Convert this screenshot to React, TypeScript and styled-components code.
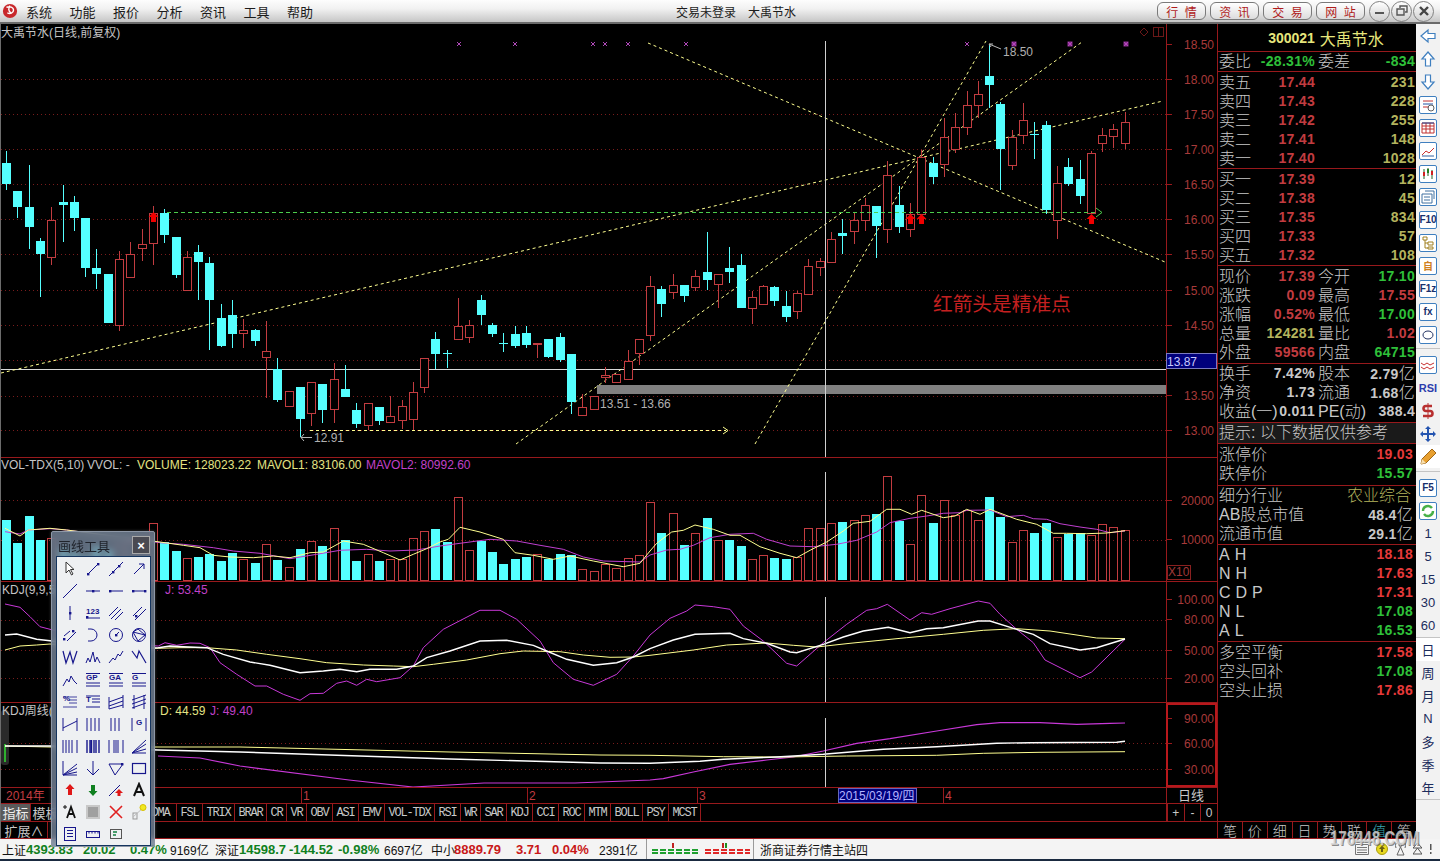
import React from 'react'
import styled, { createGlobalStyle } from 'styled-components'

const FONT = '"Liberation Sans", "Noto Sans CJK SC", sans-serif'
const RED = '#c23c40'
const BRIGHT_RED = '#e63a3a'
const GREEN = '#2fc03a'
const OLIVE = '#b4b45e'
const GREY = '#c8c8c8'
const CYAN = '#55ffff'
const LINE = '#98191c'
const AXIS_TEXT = '#a83a3a'
const NAVY = '#16168c'

const Global = createGlobalStyle`
  html, body { margin: 0; padding: 0; background: #000; }
  * { box-sizing: border-box; }
`

const Shell = styled.div`
  position: relative;
  width: 1440px;
  height: 861px;
  overflow: hidden;
  display: flex;
  flex-direction: column;
  font-family: ${FONT};
  background: #000;
`

/* title bar */
const TopBar = styled.div`
  height: 24px;
  flex: none;
  display: flex;
  align-items: center;
  padding-left: 2px;
  background: linear-gradient(#fdfdfd, #f1f1f1 40%, #c6c6c6);
  border-bottom: 2px solid #6a6a6a;
  color: #1c1c1c;
`
const Menu = styled.div`
  display: flex;
  gap: 17.5px;
  margin-left: 8px;
  font-size: 13px;
  width: 300px;
`
const Title = styled.div`
  margin-left: 350px;
  width: 450px;
  display: flex;
  gap: 12px;
  font-size: 12px;
`
const Pills = styled.div`
  display: flex;
  gap: 4px;
  margin-left: 31px;
`
const Pill = styled.div`
  width: 49px;
  height: 18px;
  display: flex;
  justify-content: space-around;
  align-items: center;
  padding: 0 5px;
  font-size: 12px;
  color: #b01c1c;
  border: 1px solid #7a7a7a;
  border-radius: 6px;
  background: linear-gradient(#fff, #dcdcdc);
`
const Round = styled.div`
  width: 21px;
  height: 21px;
  flex: none;
  margin-left: 1px;
  border: 1px solid #808080;
  border-radius: 50%;
  background: linear-gradient(#fff, #cfcfcf);
  display: flex;
  align-items: center;
  justify-content: center;
`
const Rounds = styled.div`
  display: flex;
  margin-left: 3px;
`

/* body */
const Body = styled.div`
  flex: 1;
  min-height: 0;
  display: flex;
  border-left: 1px solid #6c6c6c;
`
const ChartColumn = styled.div`
  width: 1216px;
  flex: none;
  display: flex;
  flex-direction: column;
`
const ChartPane = styled.div<{ $h: number }>`
  height: ${(p) => p.$h}px;
  flex: none;
  border-bottom: 1px solid ${LINE};
  line-height: 0;
`
const PlotSvg = styled.svg`
  display: block;
  font-family: ${FONT};
  font-size: 12px;
`
const TabRow = styled.div<{ $h: number }>`
  height: ${(p) => p.$h}px;
  flex: none;
  display: flex;
  border-bottom: 1px solid ${LINE};
`
const IndexTab = styled.div<{ $w: number; $on?: boolean; $cjk?: boolean }>`
  width: ${(p) => p.$w}px;
  flex: none;
  display: flex;
  align-items: center;
  justify-content: center;
  border-right: 1px solid ${LINE};
  background: ${(p) => (p.$on ? '#5a5a5a' : 'transparent')};
  color: ${(p) => (p.$on ? '#eee' : GREY)};
  font-family: ${(p) => (p.$cjk ? FONT : '"Liberation Mono", monospace')};
  font-size: ${(p) => (p.$cjk ? '13px' : '12px')};
  letter-spacing: ${(p) => (p.$cjk ? '0' : '-1.2px')};
  white-space: nowrap;
  overflow: hidden;
`
const ScaleButtons = styled.div`
  margin-left: auto;
  width: 51px;
  display: flex;
  border-left: 2px solid ${LINE};
`
const ScaleButton = styled.div`
  flex: 1;
  display: flex;
  align-items: center;
  justify-content: center;
  border-right: 1px solid ${LINE};
  color: ${GREY};
  font-size: 12px;
  &:last-child { border-right: 0; }
`

/* quote panel */
const QuotePanel = styled.div`
  width: 199px;
  flex: none;
  display: flex;
  flex-direction: column;
  border-left: 1px solid ${LINE};
  color: ${GREY};
`
const Section = styled.div<{ $h: number; $pt?: number; $line?: boolean }>`
  height: ${(p) => p.$h}px;
  flex: none;
  padding: ${(p) => p.$pt ?? 0}px 0 0 1px;
  border-bottom: ${(p) => (p.$line === false ? '0' : `1px solid ${LINE}`)};
`
const Header = styled(Section)`
  display: flex;
  align-items: center;
  justify-content: center;
  gap: 5px;
  padding: 1px 0 0 18px;
  color: #e6e67c;
  font-size: 16px;
`
const Code = styled.span`
  font-weight: 700;
  font-size: 14px;
`
const Row = styled.div`
  height: 19px;
  display: flex;
  gap: 3px;
  line-height: 19px;
`
const Pair = styled.div<{ $w: number }>`
  width: ${(p) => p.$w}px;
  display: flex;
  justify-content: space-between;
  white-space: nowrap;
`
const Label = styled.span<{ $wide?: boolean }>`
  font-size: 16px;
  font-weight: 300;
  color: ${GREY};
  letter-spacing: ${(p) => (p.$wide ? '5px' : '0')};
`
const Value = styled.span<{ $c: string }>`
  font-size: 14px;
  font-weight: 700;
  letter-spacing: 0.3px;
  color: ${(p) => p.$c};
`
const Unit = styled.span`
  font-size: 16px;
  font-weight: 300;
`
const Hint = styled(Section)`
  background: #1a1a1a;
  font-size: 16px;
  font-weight: 300;
  line-height: 20px;
`
const Industry = styled.span`
  font-size: 16px;
  font-weight: 300;
  color: ${OLIVE};
  padding-right: 2px;
`
const Filler = styled.div`
  flex: 1;
  padding: 1px 0 0 1px;
`
const PanelTabs = styled.div`
  height: 18px;
  flex: none;
  display: flex;
  border-top: 1px solid ${LINE};
  margin-top: -1px;
  border-bottom: 1px solid ${LINE};
`
const PanelTab = styled.div<{ $on?: boolean }>`
  flex: 1;
  display: flex;
  align-items: center;
  justify-content: center;
  font-size: 14px;
  font-weight: 300;
  color: ${(p) => (p.$on ? '#3aa8b0' : GREY)};
  border-right: 1px solid ${LINE};
  &:last-child { border-right: 0; }
`

/* right rail */
const Rail = styled.div`
  width: 24px;
  flex: none;
  background: #f2f2f2;
  display: flex;
  flex-direction: column;
  align-items: center;
`
const RailItem = styled.div<{ $on?: boolean }>`
  width: 24px;
  height: 23px;
  flex: none;
  display: flex;
  align-items: center;
  justify-content: center;
  background: ${(p) => (p.$on ? '#fff' : 'transparent')};
  color: #1c2c5c;
  font-size: 13px;
`
const RailBox = styled.div<{ $c?: string }>`
  width: 18px;
  height: 18px;
  display: flex;
  align-items: center;
  justify-content: center;
  border: 1px solid #3f7fbf;
  border-radius: 2px;
  background: #fff;
  font-size: 10px;
  font-weight: 700;
  color: ${(p) => p.$c ?? '#18306c'};
`
const RailRule = styled.div<{ $gap: number; $after: number }>`
  width: 24px;
  height: 1px;
  flex: none;
  margin: ${(p) => p.$gap}px 0 ${(p) => p.$after}px;
  background: #c4c4c4;
`
const RsiText = styled.span`
  font-size: 11px;
  font-weight: 700;
  color: #2c3cac;
`

/* status bar */
const StatusBar = styled.div`
  height: 22px;
  flex: none;
  display: flex;
  align-items: center;
  padding-left: 2px;
  background: #f4f4f4;
  border-bottom: 2px solid #1a2a40;
  color: #111;
  font-size: 12px;
`
const Stat = styled.span<{ $w: number; $c?: string; $b?: boolean }>`
  width: ${(p) => p.$w}px;
  flex: none;
  font-size: ${(p) => (p.$b ? '13px' : '12px')};
  font-weight: ${(p) => (p.$b ? 700 : 400)};
  color: ${(p) => p.$c ?? '#111'};
  white-space: nowrap;
`
const StatusRule = styled.div`
  width: 1px;
  height: 20px;
  flex: none;
  background: #9a9a9a;
`
const ServerName = styled(Stat)`
  margin-left: 6px;
`
const BreadthWrap = styled.div`
  margin: 0 3px 0 5px;
  line-height: 0;
`
const Tray = styled.div`
  margin-left: auto;
  display: flex;
  align-items: center;
  gap: 7px;
  padding-right: 8px;
`
const Watermark = styled.div`
  position: absolute;
  left: 1330px;
  top: 829px;
  font-size: 15px;
  font-weight: 700;
  color: rgba(214, 214, 214, 0.82);
  transform: scaleY(1.3);
  text-shadow: 1px 1px 0 rgba(90, 90, 90, 0.7);
  pointer-events: none;
`

/* floating drawing toolbar */
const ToolWindow = styled.div`
  position: absolute;
  left: 51px;
  top: 531px;
  width: 104px;
  height: 316px;
  padding: 24px 3px 0 4px;
  border: 1px solid #8d97a6;
  border-radius: 2px;
  background: rgba(116, 132, 152, 0.82);
  backdrop-filter: blur(3px);
  box-shadow: 0 0 3px rgba(255, 255, 255, 0.25);
`
const ToolTitle = styled.div`
  position: absolute;
  left: 6px;
  top: 4px;
  font-size: 13px;
  color: #20242c;
`
const ToolClose = styled.div`
  position: absolute;
  right: 4px;
  top: 4px;
  width: 18px;
  height: 18px;
  display: flex;
  align-items: center;
  justify-content: center;
  border: 1px solid #a8a8a8;
  background: #4a4a52;
  color: #fff;
  font-size: 13px;
  font-weight: 700;
`
const ToolGrid = styled.div`
  height: 290px;
  padding: 1px 0 0 1px;
  display: grid;
  grid-template-columns: repeat(4, 23px);
  grid-auto-rows: 22.1px;
  background: #eef0f2;
  border: 1px solid #14345e;
`
const ToolCell = styled.div`
  display: flex;
  align-items: center;
  justify-content: center;
  color: ${NAVY};
`
const MiniText = styled.text`
  font-size: 8px;
  font-weight: 700;
  fill: ${NAVY};
`

type Candle = ['c' | 'r', number, number, number, number]

// high, body top, body bottom, low in page pixels
const CANDLES: Candle[] = [
  ['c', 151, 163, 184, 190], ['c', 191, 191, 207, 218], ['c', 165, 207, 227, 249], ['c', 238, 241, 254, 297],
  ['r', 207, 220, 257, 265], ['c', 185, 202, 205, 242], ['c', 196, 202, 218, 231], ['c', 218, 218, 268, 277],
  ['c', 249, 268, 274, 289], ['c', 274, 274, 323, 323], ['r', 251, 259, 325, 331], ['r', 242, 254, 277, 277],
  ['r', 229, 244, 248, 261], ['r', 206, 213, 243, 265], ['c', 209, 213, 235, 243], ['c', 237, 237, 275, 278],
  ['r', 251, 257, 290, 290], ['c', 245, 252, 262, 300], ['c', 257, 263, 300, 350], ['c', 304, 318, 346, 347],
  ['c', 300, 315, 334, 348], ['r', 319, 330, 333, 348], ['c', 329, 330, 341, 346], ['r', 321, 351, 357, 398],
  ['c', 358, 369, 400, 402], ['r', 391, 391, 406, 406], ['c', 387, 387, 419, 437], ['r', 382, 382, 413, 426],
  ['c', 384, 384, 410, 423], ['r', 363, 379, 409, 423], ['c', 365, 389, 397, 397], ['c', 403, 410, 424, 428],
  ['r', 403, 403, 425, 430], ['c', 407, 407, 421, 425], ['r', 396, 416, 422, 422], ['r', 400, 406, 420, 429],
  ['r', 382, 392, 419, 430], ['r', 358, 358, 387, 393], ['c', 332, 339, 354, 369], ['c', 350, 353, 354, 368],
  ['r', 298, 326, 339, 339], ['r', 320, 325, 337, 343], ['c', 295, 300, 315, 325], ['c', 323, 325, 334, 337],
  ['c', 333, 343, 344, 352], ['c', 326, 334, 346, 348], ['c', 326, 333, 345, 348], ['r', 343, 343, 344, 358],
  ['c', 339, 339, 357, 358], ['c', 333, 337, 360, 362], ['c', 354, 354, 402, 414], ['r', 394, 407, 415, 415],
  ['r', 396, 396, 409, 409], ['r', 367, 375, 377, 383], ['r', 374, 374, 382, 382], ['r', 350, 361, 379, 379],
  ['r', 339, 339, 353, 365], ['r', 276, 286, 335, 341], ['c', 286, 289, 304, 317], ['r', 274, 285, 292, 299],
  ['c', 285, 285, 296, 302], ['r', 270, 276, 287, 291], ['c', 232, 272, 280, 290], ['r', 274, 274, 284, 308],
  ['c', 247, 268, 272, 283], ['c', 254, 265, 308, 308], ['r', 291, 297, 308, 324], ['r', 285, 286, 304, 305],
  ['c', 286, 287, 301, 306], ['c', 291, 306, 317, 322], ['r', 291, 293, 311, 319], ['r', 259, 266, 294, 294],
  ['r', 258, 261, 267, 276], ['r', 232, 239, 262, 262], ['c', 219, 233, 236, 254], ['r', 213, 220, 231, 244],
  ['r', 198, 205, 220, 231], ['c', 206, 206, 226, 258], ['r', 161, 175, 229, 243], ['c', 186, 205, 227, 233],
  ['r', 203, 214, 229, 237], ['r', 150, 157, 214, 214], ['c', 157, 163, 177, 184], ['r', 118, 137, 164, 177],
  ['r', 113, 127, 149, 153], ['r', 91, 105, 127, 135], ['r', 81, 94, 105, 118], ['c', 44, 76, 85, 108],
  ['c', 102, 104, 149, 190], ['r', 130, 137, 165, 170], ['r', 103, 120, 135, 144], ['c', 122, 134, 135, 159],
  ['c', 121, 125, 210, 214], ['r', 166, 183, 220, 239], ['c', 158, 167, 184, 186], ['c', 160, 179, 196, 204],
  ['r', 151, 153, 213, 213], ['r', 128, 135, 143, 152], ['r', 124, 129, 136, 148], ['r', 112, 122, 143, 149],
]

const VOL_TOPS = [
  520, 543, 516, 540, 538, 548, 552, 556, 546, 550, 544, 541, 536, 523, 542, 551, 558, 557, 554, 561,
  553, 559, 563, 544, 560, 567, 549, 541, 546, 528, 540, 561, 554, 561, 559, 559, 538, 531, 529, 542,
  497, 550, 541, 552, 564, 559, 557, 554, 559, 554, 555, 569, 571, 564, 568, 558, 555, 502, 533, 513,
  545, 533, 518, 540, 540, 546, 559, 555, 558, 559, 557, 528, 528, 523, 522, 520, 515, 514, 476, 521,
  544, 495, 523, 500, 515, 510, 520, 497, 517, 542, 530, 533, 523, 537, 534, 533, 535, 524, 527, 530,
]

const xOf = (i: number) => Math.round(6 + 11.3 * i) + 0.5

// "x,y" pairs read off a 3x crop, turned into page pixels
const pts = (ox: number, oy: number, s: string) =>
  s
    .trim()
    .split(/\s+/)
    .map((p) => {
      const [x, y] = p.split(',').map(Number)
      return `${(x / 3 + ox).toFixed(1)},${(y / 3 + oy).toFixed(1)}`
    })
    .join(' ')

const VOL_YELLOW = [
  pts(0, 520, '15,25 60,48 85,30 150,25 200,30'),
  pts(150, 456, '30,258 100,268 150,275 190,298 240,303 310,305 370,300 420,305 480,290 520,288 580,255 640,265 700,290 750,312 790,295 830,278 870,258 895,250 930,214 990,228 1060,250 1095,290 1150,298 1210,310 1260,300 1330,315 1420,332 1470,322'),
  pts(650, 456, '0,285 20,262 65,228 100,223 135,207 190,220 240,238 270,238 330,272 390,292 440,305 480,283 530,258 580,225 610,202 660,196 710,160 750,160 785,175 815,163 880,185 915,180 950,160 990,175 1020,160 1100,190 1160,205 1210,232 1250,232 1310,233 1370,231 1425,224'),
].join(' ')
const VOL_MAGENTA = [
  pts(0, 520, '15,35 60,42 85,30 150,26 200,30'),
  pts(150, 456, '30,260 100,265 190,275 250,285 330,292 420,308 500,295 570,283 650,280 720,285 800,282 870,270 930,262 1020,250 1100,255 1170,268 1240,280 1300,303 1360,315 1470,318'),
  pts(650, 456, '0,297 50,282 90,280 130,268 180,245 240,235 310,232 350,250 420,270 490,272 560,265 620,253 680,228 720,200 780,187 830,180 880,172 930,170 950,163 1020,162 1070,182 1120,178 1150,188 1190,190 1230,203 1290,213 1340,220 1380,230 1425,225'),
].join(' ')

const KDJ_WHITE = [
  pts(0, 520, '15,345 50,342 110,358 150,362 300,385'),
  pts(150, 456, '25,575 60,570 100,572 170,575 220,595 300,618 360,628 450,650 520,645 570,640 620,647 660,640 740,640 790,630 830,605 900,585 990,555 1070,553 1150,568 1190,585 1250,610 1330,628 1400,620 1450,603'),
  pts(650, 456, '0,578 70,552 135,535 240,532 280,548 350,562 420,588 440,590 520,565 580,543 640,525 715,514 780,530 830,518 880,515 985,495 1020,495 1100,520 1150,535 1200,563 1290,582 1340,575 1425,549'),
].join(' ')
const KDJ_YELLOW = [
  pts(0, 520, '15,390 60,378 110,375 150,372 300,385'),
  pts(150, 456, '25,577 90,575 170,575 260,582 350,595 450,608 530,620 640,627 730,630 790,632 850,625 950,612 1050,593 1120,585 1230,587 1300,597 1380,604 1450,603'),
  pts(650, 456, '0,598 130,582 230,567 350,561 430,568 500,573 600,562 770,545 880,535 1000,523 1100,518 1200,525 1340,546 1425,548'),
].join(' ')
const KDJ_MAGENTA = [
  pts(0, 520, '15,252 60,262 90,290 120,320 150,328 300,370'),
  pts(150, 456, '25,570 45,560 80,568 120,561 150,562 180,575 210,620 260,655 315,690 350,690 400,715 450,733 480,713 520,712 560,682 590,675 620,688 650,670 680,677 750,665 790,630 820,575 880,520 990,463 1050,463 1100,490 1170,555 1210,620 1270,670 1330,688 1400,655 1450,600'),
  pts(650, 456, '0,537 60,487 110,465 135,447 190,452 240,460 280,510 340,555 410,622 440,630 520,560 590,505 650,463 680,458 712,445 780,492 815,470 845,475 900,458 985,435 1020,442 1050,475 1100,520 1150,560 1185,612 1290,665 1325,648 1425,550'),
].join(' ')

const WEEK_MAGENTA = [
  '158,756 200,758 240,766 349,780 413,787 484,783 575,783',
  pts(650, 456, '0,972 40,968 130,948 240,925 350,912 430,903 520,885 620,862 720,848 860,825 980,806 1050,800 1170,800 1280,805 1380,802 1425,801'),
].join(' ')
const WEEK_WHITE = [
  '5,746 50,746 158,750 240,752 450,759 600,763',
  pts(650, 456, '0,922 150,916 220,910 380,903 520,895 700,880 860,872 1040,862 1140,860 1400,859 1425,856'),
].join(' ')
const WEEK_YELLOW = [
  '5,746 50,747 158,747 240,747 450,752 600,755',
  pts(650, 456, '0,898 220,902 400,903 590,900 860,898 1000,892 1170,889 1425,887'),
].join(' ')

const Plot = ({ top, h, children }: { top: number; h: number; children: React.ReactNode }) => (
  <PlotSvg width={1216} height={h} viewBox={`1 ${top} 1216 ${h}`}>
    {children}
  </PlotSvg>
)

const Grid = ({ ys }: { ys: number[] }) => (
  <>
    {ys.map((y) => (
      <line key={y} x1={1} x2={1166} y1={y + 0.5} y2={y + 0.5} stroke="#7a1c1c" strokeDasharray="1 3" />
    ))}
  </>
)

const Trace = ({ p, c, w = 1 }: { p: string; c: string; w?: number }) => (
  <polyline points={p} fill="none" stroke={c} strokeWidth={w} />
)

const AxisLine = ({ y1, y2 }: { y1: number; y2: number }) => (
  <line x1={1166.5} x2={1166.5} y1={y1} y2={y2} stroke={LINE} />
)

const AxisLabels = ({ rows }: { rows: [string, number][] }) => (
  <>
    {rows.map(([t, y]) => (
      <React.Fragment key={t}>
        <line x1={1166} x2={1172} y1={y + 0.5} y2={y + 0.5} stroke={LINE} />
        <text x={1214} y={y + 4.5} textAnchor="end" fill={AXIS_TEXT}>
          {t}
        </text>
      </React.Fragment>
    ))}
  </>
)

const Hash = ({ x, big }: { x: number; big?: boolean }) => (
  <g stroke="#b048b8" strokeWidth={1}>
    {big && <rect x={x - 2.5} y={41.5} width={5} height={5} fill="#8a2c90" stroke="none" />}
    <line x1={x - 2} x2={x + 2} y1={42} y2={46} />
    <line x1={x + 2} x2={x - 2} y1={42} y2={46} />
  </g>
)

const UpArrow = ({ x, y }: { x: number; y: number }) => (
  <polygon
    points={`${x},${y} ${x + 5},${y + 5} ${x + 2.5},${y + 5} ${x + 2.5},${y + 10} ${x - 2.5},${y + 10} ${x - 2.5},${y + 5} ${x - 5},${y + 5}`}
    fill="#f00000"
  />
)

const PriceAxisRows: [string, number][] = [
  ['18.50', 44], ['18.00', 79], ['17.50', 114], ['17.00', 149], ['16.50', 184], ['16.00', 219],
  ['15.50', 254], ['15.00', 290], ['14.50', 325], ['13.50', 395], ['13.00', 430],
]

const MainPane = () => (
  <ChartPane $h={434}>
    <Plot top={24} h={433}>
      <Grid ys={[79, 114, 149, 184, 219, 254, 290, 325, 360, 396, 430]} />
      <text x={1} y={37} fill="#c4c4c4">大禹节水(日线,前复权)</text>
      <polygon points="1144,28 1148,32 1144,36 1140,32" fill="none" stroke="#6c1818" />
      <rect x={1153.5} y={27.5} width={10} height={9} fill="none" stroke="#6c1818" />
      <line x1={1158.5} x2={1158.5} y1={28} y2={36} stroke="#6c1818" />
      <line x1={1} x2={1166} y1={369.5} y2={369.5} stroke="#d8d8d8" />
      <rect x={597} y={385} width={569} height={9} fill="#808080" />
      <g stroke="#ffff90" strokeDasharray="3 3" fill="none">
        <line x1={1} y1={373} x2={1163} y2={101} />
        <line x1={516} y1={444} x2={1082} y2={42} />
        <line x1={755} y1={444} x2={986} y2={41} />
        <line x1={648} y1={43} x2={1165} y2={262} />
        <line x1={310} y1={430.5} x2={726} y2={430.5} />
      </g>
      <path d="M723 427l5 3.5-5 3.5" fill="none" stroke="#ffff90" />
      {CANDLES.map(([k, hi, t, b, lo], i) => {
        const x = xOf(i)
        const c = k === 'c' ? CYAN : RED
        return (
          <g key={i} shapeRendering="crispEdges">
            <line x1={x} x2={x} y1={hi} y2={lo} stroke={c} />
            {k === 'c' ? (
              <rect x={x - 4.5} y={t} width={9} height={Math.max(b - t, 1)} fill={c} />
            ) : (
              <rect x={x - 4} y={t + 0.5} width={8} height={Math.max(b - t, 1)} fill="#000" stroke={c} />
            )}
          </g>
        )
      })}
      <line x1={167} x2={1098} y1={212.5} y2={212.5} stroke="#4ccc4c" strokeDasharray="4 3" />
      <path d="M1096 208l6 4.5-6 4.5" fill="none" stroke="#4ccc4c" />
      <line x1={825.5} x2={825.5} y1={41} y2={457} stroke="#d0d0d0" />
      {[459, 515, 593, 605, 628, 686, 967].map((x) => (
        <Hash key={x} x={x} />
      ))}
      {[1014, 1070, 1126].map((x) => (
        <Hash key={x} x={x} big />
      ))}
      <UpArrow x={153.5} y={212} />
      <UpArrow x={910.5} y={214} />
      <UpArrow x={921.5} y={214} />
      <UpArrow x={1091.5} y={214} />
      <path d="M312 437.5H301M304 434l-3 3.5 3 3.5" fill="none" stroke="#b8b8b8" />
      <text x={314} y={441.5} fill="#b0b0b0">12.91</text>
      <text x={600} y={407.5} fill="#b0b0b0">13.51 - 13.66</text>
      <path d="M1001 49l-12-5M989 44l4 0M989 44l2 3" fill="none" stroke="#b8b8b8" />
      <text x={1003} y={55.5} fill="#b0b0b0">18.50</text>
      <text x={933} y={311} fontSize={19.7} fill="#c42020">红箭头是精准点</text>
      <AxisLine y1={24} y2={457} />
      <AxisLabels rows={PriceAxisRows} />
      <rect x={1166.5} y={353.5} width={50} height={15} fill="#00007c" stroke="#7a7ac0" />
      <text x={1167} y={365.5} fill="#c8c8ff">13.87</text>
    </Plot>
  </ChartPane>
)

const VolumePane = () => (
  <ChartPane $h={124}>
    <Plot top={458} h={123}>
      <Grid ys={[500, 540]} />
      <text x={1} y={469} fill="#c4c4c4">VOL-TDX(5,10)</text>
      <text x={87} y={469} fill="#c4c4c4">VVOL: -</text>
      <text x={137} y={469} fill="#e4e484">VOLUME: 128023.22</text>
      <text x={257} y={469} fill="#e4e484">MAVOL1: 83106.00</text>
      <text x={366} y={469} fill="#c040c8">MAVOL2: 80992.60</text>
      {VOL_TOPS.map((t, i) => {
        const x = xOf(i)
        return CANDLES[i][0] === 'c' ? (
          <rect key={i} x={x - 4.5} y={t} width={9} height={580 - t} fill={CYAN} shapeRendering="crispEdges" />
        ) : (
          <rect key={i} x={x - 4} y={t + 0.5} width={8} height={580 - t} fill="none" stroke={RED} shapeRendering="crispEdges" />
        )
      })}
      <Trace p={VOL_MAGENTA} c="#c040d0" />
      <Trace p={VOL_YELLOW} c="#ffff90" />
      <line x1={825.5} x2={825.5} y1={472} y2={581} stroke="#d0d0d0" />
      <AxisLine y1={458} y2={581} />
      <AxisLabels rows={[['20000', 500], ['10000', 539]]} />
      <rect x={1167.5} y={565.5} width={23} height={14} fill="none" stroke="#8a2020" />
      <text x={1168} y={576} fill="#a03838">X10</text>
    </Plot>
  </ChartPane>
)

const KdjPane = () => (
  <ChartPane $h={121}>
    <Plot top={582} h={120}>
      <Grid ys={[620, 650, 678]} />
      <text x={2} y={594} fill="#c4c4c4">KDJ(9,9,5)</text>
      <text x={165} y={594} fill="#c040c8">J: 53.45</text>
      <Trace p={KDJ_MAGENTA} c="#c838d8" />
      <Trace p={KDJ_YELLOW} c="#ffff90" />
      <Trace p={KDJ_WHITE} c="#ffffff" w={1.4} />
      <line x1={825.5} x2={825.5} y1={597} y2={702} stroke="#d0d0d0" />
      <AxisLine y1={582} y2={702} />
      <AxisLabels rows={[['100.00', 599], ['80.00', 619], ['50.00', 650], ['20.00', 678]]} />
    </Plot>
  </ChartPane>
)

const WeekPane = () => (
  <ChartPane $h={85}>
    <Plot top={703} h={84}>
      <Grid ys={[743, 769]} />
      <rect x={1} y={710} width={8} height={55} rx={3} fill="#2a2a2a" />
      <rect x={4} y={744} width={2} height={18} fill="#2fb02f" />
      <text x={2} y={715} fill="#c4c4c4">KDJ周线(</text>
      <text x={160} y={715} fill="#e4e484">D: 44.59</text>
      <text x={210} y={715} fill="#c040c8">J: 49.40</text>
      <Trace p={WEEK_MAGENTA} c="#c838d8" w={1.2} />
      <Trace p={WEEK_YELLOW} c="#ffff90" />
      <Trace p={WEEK_WHITE} c="#ffffff" w={1.4} />
      <line x1={825.5} x2={825.5} y1={718} y2={787} stroke="#d0d0d0" />
      <rect x={1167} y={704} width={49} height={82} fill="none" stroke="#b8181c" strokeWidth={2} />
      {[['90.00', 718], ['60.00', 743], ['30.00', 769]].map(([t, y]) => (
        <React.Fragment key={t}>
          <line x1={1167} x2={1172} y1={Number(y) + 0.5} y2={Number(y) + 0.5} stroke={LINE} />
          <text x={1214} y={Number(y) + 4.5} textAnchor="end" fill={AXIS_TEXT}>{t}</text>
        </React.Fragment>
      ))}
    </Plot>
  </ChartPane>
)

const DateAxis = () => (
  <ChartPane $h={16}>
    <Plot top={788} h={15}>
      <text x={6} y={800} fill={RED}>2014年</text>
      {[[301, '1'], [527, '2'], [697, '3'], [943, '4']].map(([x, t]) => (
        <React.Fragment key={t}>
          <line x1={Number(x) + 0.5} x2={Number(x) + 0.5} y1={788} y2={803} stroke={LINE} />
          <text x={Number(x) + 2} y={800} fill={RED}>{t}</text>
        </React.Fragment>
      ))}
      <rect x={838.5} y={788.5} width={78} height={14} fill="#00007c" stroke="#6868b8" />
      <text x={839} y={800} fill="#b4b4ff">2015/03/19/四</text>
      <AxisLine y1={788} y2={803} />
      <text x={1191} y={800} textAnchor="middle" fontSize={13} fill={GREY}>日线</text>
    </Plot>
  </ChartPane>
)

const INDEX_TABS: [string, number][] = [
  ['MACD', 50], ['DMI', 34], ['DMA', 32], ['FSL', 26], ['TRIX', 32], ['BRAR', 32], ['CR', 20], ['VR', 20],
  ['OBV', 26], ['ASI', 26], ['EMV', 26], ['VOL-TDX', 50], ['RSI', 26], ['WR', 20], ['SAR', 26], ['KDJ', 26],
  ['CCI', 26], ['ROC', 26], ['MTM', 26], ['BOLL', 32], ['PSY', 26], ['MCST', 32],
]

type QuoteCell = { l: React.ReactNode; v: React.ReactNode; c: string }

const Quote = ({ cells }: { cells: QuoteCell[] }) => (
  <Row>
    {cells.map((cell, i) => (
      <Pair key={i} $w={i === 0 ? 96 : 97}>
        <Label>{cell.l}</Label>
        <Value $c={cell.c}>{cell.v}</Value>
      </Pair>
    ))}
  </Row>
)

const Single = ({ l, v, c, wide }: { l: React.ReactNode; v: React.ReactNode; c: string; wide?: boolean }) => (
  <Row>
    <Pair $w={194}>
      <Label $wide={wide}>{l}</Label>
      <Value $c={c}>{v}</Value>
    </Pair>
  </Row>
)

const SELL: [string, string, string][] = [
  ['卖五', '17.44', '231'], ['卖四', '17.43', '228'], ['卖三', '17.42', '255'], ['卖二', '17.41', '148'], ['卖一', '17.40', '1028'],
]
const BUY: [string, string, string][] = [
  ['买一', '17.39', '12'], ['买二', '17.38', '45'], ['买三', '17.35', '834'], ['买四', '17.33', '57'], ['买五', '17.32', '108'],
]

const Yi = ({ n }: { n: string }) => (
  <>
    {n}
    <Unit>亿</Unit>
  </>
)

const Panel = () => (
  <QuotePanel>
    <Header $h={28}>
      <Code>300021</Code>
      <span>大禹节水</span>
    </Header>
    <Section $h={20}>
      <Quote cells={[{ l: '委比', v: '-28.31%', c: GREEN }, { l: '委差', v: '-834', c: GREEN }]} />
    </Section>
    {[SELL, BUY].map((book, n) => (
      <Section key={n} $h={97} $pt={1}>
        {book.map(([l, p, q]) => (
          <Row key={l}>
            <Pair $w={96}>
              <Label>{l}</Label>
              <Value $c={RED}>{p}</Value>
            </Pair>
            <Pair $w={97}>
              <span />
              <Value $c={OLIVE}>{q}</Value>
            </Pair>
          </Row>
        ))}
      </Section>
    ))}
    <Section $h={98} $pt={1}>
      <Quote cells={[{ l: '现价', v: '17.39', c: RED }, { l: '今开', v: '17.10', c: GREEN }]} />
      <Quote cells={[{ l: '涨跌', v: '0.09', c: RED }, { l: '最高', v: '17.55', c: RED }]} />
      <Quote cells={[{ l: '涨幅', v: '0.52%', c: RED }, { l: '最低', v: '17.00', c: GREEN }]} />
      <Quote cells={[{ l: '总量', v: '124281', c: OLIVE }, { l: '量比', v: '1.02', c: RED }]} />
      <Quote cells={[{ l: '外盘', v: '59566', c: RED }, { l: '内盘', v: '64715', c: GREEN }]} />
    </Section>
    <Section $h={59}>
      <Quote cells={[{ l: '换手', v: '7.42%', c: GREY }, { l: '股本', v: <Yi n="2.79" />, c: GREY }]} />
      <Quote cells={[{ l: '净资', v: '1.73', c: GREY }, { l: '流通', v: <Yi n="1.68" />, c: GREY }]} />
      <Quote cells={[{ l: '收益(一)', v: '0.011', c: GREY }, { l: 'PE(动)', v: '388.4', c: GREY }]} />
    </Section>
    <Hint $h={21}>提示: 以下数据仅供参考</Hint>
    <Section $h={42} $pt={1}>
      <Single l="涨停价" v="19.03" c={BRIGHT_RED} />
      <Single l="跌停价" v="15.57" c={GREEN} />
    </Section>
    <Section $h={59}>
      <Row>
        <Pair $w={194}>
          <Label>细分行业</Label>
          <Industry>农业综合</Industry>
        </Pair>
      </Row>
      <Single l={<><b>AB</b>股总市值</>} v={<Yi n="48.4" />} c={GREY} />
      <Single l="流通市值" v={<Yi n="29.1" />} c={GREY} />
    </Section>
    <Section $h={97}>
      <Single wide l="AH" v="18.18" c={BRIGHT_RED} />
      <Single wide l="NH" v="17.63" c={BRIGHT_RED} />
      <Single wide l="CDP" v="17.31" c={BRIGHT_RED} />
      <Single wide l="NL" v="17.08" c={GREEN} />
      <Single wide l="AL" v="16.53" c={GREEN} />
    </Section>
    <Filler>
      <Single l="多空平衡" v="17.58" c={BRIGHT_RED} />
      <Single l="空头回补" v="17.08" c={GREEN} />
      <Single l="空头止损" v="17.86" c={BRIGHT_RED} />
    </Filler>
    <PanelTabs>
      {['笔', '价', '细', '日', '势', '联', '值', '筹'].map((t) => (
        <PanelTab key={t} $on={t === '值'}>{t}</PanelTab>
      ))}
    </PanelTabs>
  </QuotePanel>
)

const Box = ({ children }: { children: React.ReactNode }) => <RailBox>{children}</RailBox>

const RailSvg = ({ children }: { children: React.ReactNode }) => (
  <svg width={16} height={16} viewBox="0 0 16 16" fill="none">
    {children}
  </svg>
)

const RailNav = ({ d }: { d: string }) => (
  <svg width={18} height={18} viewBox="0 0 18 18">
    <path d={d} fill="#fff" stroke="#3f7fbf" strokeWidth={1.2} />
  </svg>
)

const RAIL_TOP: React.ReactNode[] = [
  <RailNav d="M2 9l7-6v3.5h7v5H9V15z" />,
  <RailNav d="M9 2l6 7h-3.5v7h-5V9H3z" />,
  <RailNav d="M9 16l6-7h-3.5V2h-5v7H3z" />,
  <Box><RailSvg><path d="M3 4h10" stroke="#c03030" /><path d="M3 7h10" stroke="#2050a0" /><path d="M3 10h6" stroke="#c03030" /><circle cx="11" cy="11" r="3" stroke="#606060" /></RailSvg></Box>,
  <Box><RailSvg><path d="M2 3h12v10H2zM2 6h12M2 9h12M6 3v10M10 3v10" stroke="#c03030" /><path d="M2 3h12" stroke="#2050a0" /></RailSvg></Box>,
  <Box><RailSvg><path d="M2 12l4-4 3 2 5-5" stroke="#c83030" /><path d="M2 13h12" stroke="#3060a0" /></RailSvg></Box>,
  <Box><RailSvg><path d="M4 3v10M8 2v8M12 4v9" stroke="#206020" /><path d="M3 6h2v4H3zM11 5h2v4h-2z" fill="#d02020" /><path d="M7 3h2v4H7z" fill="#208020" /></RailSvg></Box>,
  <Box><RailSvg><path d="M5 2h9v8M2 5h10v9H2zM4 8h6M4 11h6" stroke="#4070a0" /></RailSvg></Box>,
  <Box>F10</Box>,
  <Box><RailSvg><path d="M3 2h4v3H3zM8 7h5v3H8zM8 12h5v2H8zM5 5v8h3M5 8h3" stroke="#a08020" /></RailSvg></Box>,
  <RailBox $c="#d08020">自</RailBox>,
  <Box>F1z</Box>,
  <RailBox>fx</RailBox>,
  <Box><RailSvg><ellipse cx="8" cy="8" rx="5" ry="4" stroke="#203060" /></RailSvg></Box>,
]

const RAIL_MID: React.ReactNode[] = [
  <Box><RailSvg><path d="M1 6l3 2 3-2 3 2 4-2M1 10l3 2 3-2 3 2 4-2" stroke="#c83030" /></RailSvg></Box>,
  <RsiText>RSI</RsiText>,
  <svg width={18} height={18} viewBox="0 0 18 18">
    <path d="M13 4H7a2.5 2.5 0 000 5h4a2.500 2.500 0 010 5H4" fill="none" stroke="#b83030" strokeWidth={2.6} />
    <path d="M9 1v16" stroke="#b83030" />
  </svg>,
  <svg width={18} height={18} viewBox="0 0 18 18">
    <path d="M9 1l3 3h-2v4h4V6l3 3-3 3v-2h-4v4h2l-3 3-3-3h2v-4H4v2L1 9l3-3v2h4V4H6z" fill="#2454b0" />
  </svg>,
]

const RAIL_LOW: React.ReactNode[] = [
  <Box>F5</Box>,
  <Box><RailSvg><path d="M3 8a5 5 0 019-3M13 8a5 5 0 01-9 3" stroke="#48b048" strokeWidth={2.4} /></RailSvg></Box>,
  '1', '5', '15', '30', '60',
]

const RightRail = () => (
  <Rail>
    {RAIL_TOP.map((item, i) => <RailItem key={i}>{item}</RailItem>)}
    <RailRule $gap={2} $after={4} />
    {RAIL_MID.map((item, i) => <RailItem key={i}>{item}</RailItem>)}
    <RailItem $on>
      <svg width={20} height={20} viewBox="0 0 20 20">
        <path d="M3 17l1-5L14 2l4 4L8 16z" fill="#e8a030" stroke="#a06818" />
        <path d="M3 17l1-5 4 4z" fill="#f8e0b0" />
      </svg>
    </RailItem>
    <RailRule $gap={3} $after={4} />
    {RAIL_LOW.map((item, i) => <RailItem key={i}>{item}</RailItem>)}
    <RailRule $gap={0} $after={0} />
    {['日', '周', '月', 'N', '多', '季', '年'].map((t) => (
      <RailItem key={t} $on={t === '日'}>{t}</RailItem>
    ))}
    <RailRule $gap={0} $after={0} />
  </Rail>
)

/* the little drawings of the line tools */
const Ico = ({ children, sw = 1 }: { children: React.ReactNode; sw?: number }) => (
  <svg width={16} height={16} viewBox="0 0 16 16" fill="none" stroke="currentColor" strokeWidth={sw}>
    {children}
  </svg>
)
const Dot = ({ x, y }: { x: number; y: number }) => <rect x={x - 1} y={y - 1} width={2.4} height={2.4} fill={NAVY} stroke="none" />

const Bars = ({ label }: { label: string }) => (
  <Ico>
    <MiniText x={1} y={8} stroke="none">{label}</MiniText>
    <path d="M1 1.500h14M1 11h14M1 14h14" />
  </Ico>
)

const TOOLS: React.ReactNode[] = [
  <Ico><path d="M4 1v11l3-3 2.500 5 1.500-1-2.500-4.500H12z" fill="#fff" stroke="#333" /></Ico>,
  <Ico><path d="M3 13L13 3" /><Dot x={3} y={13} /><Dot x={13} y={3} /></Ico>,
  <Ico><path d="M1 15L15 1" /><Dot x={5} y={11} /><Dot x={11} y={5} /></Ico>,
  <Ico><path d="M3 13L13 3M8 3h5v5" /></Ico>,
  <Ico><path d="M1 15L15 1" /></Ico>,
  <Ico><path d="M1 8h14" /><Dot x={8} y={8} /></Ico>,
  <Ico><path d="M1 8h14" /><Dot x={2} y={8} /></Ico>,
  <Ico><path d="M1 8h14" /><Dot x={2} y={8} /><Dot x={14} y={8} /></Ico>,
  <Ico><path d="M8 1v14" /><Dot x={8} y={8} /></Ico>,
  <Ico><MiniText x={1} y={9} stroke="none">123</MiniText><path d="M1 13h14" /><Dot x={2} y={12} /></Ico>,
  <Ico><path d="M1 11l9-9M3 14l10-10M7 15l8-8" /></Ico>,
  <Ico><path d="M2 11l9-9M4 15L15 4" /><Dot x={5} y={11} /></Ico>,
  <Ico><path d="M2 9l6-5M5 14l9-9" /><Dot x={2} y={12} /><Dot x={11} y={4} /></Ico>,
  <Ico><path d="M6 2a6 6 0 010 12M3 2h3M3 14h3" /></Ico>,
  <Ico><circle cx="8" cy="8" r="6.500" /><path d="M8 8l3-3" /><Dot x={8} y={8} /></Ico>,
  <Ico><circle cx="8" cy="8" r="6.500" /><path d="M2 5l12 3-7 6zM2 5l5-3 7 6" /></Ico>,
  <Ico sw={1.2}><path d="M1 2l3 12 4-11 3 11 4-12" /></Ico>,
  <Ico><path d="M1 14l2-5 2 4 3-10 2 10 2-5 3 6" /></Ico>,
  <Ico><path d="M1 14l4-5 2 2 3-6 2 2 3-5" /></Ico>,
  <Ico sw={1.2}><path d="M1 2l5 7 2-7 7 12" /></Ico>,
  <Ico><path d="M1 14l4-7 2 3 2-6 3 5 3 3" /></Ico>,
  <Bars label="GP" />,
  <Bars label="GA" />,
  <Bars label="G" />,
  <Ico><MiniText x={1} y={7} stroke="none">%</MiniText><path d="M1 3h14M7 6h8M7 9h8M1 13h14" strokeOpacity={0.8} /></Ico>,
  <Ico><MiniText x={1} y={8} stroke="none">T</MiniText><path d="M1 2h14M7 5h8M7 8h8M1 13h14" /></Ico>,
  <Ico><path d="M1 3v12M15 1v13M1 8l14-5M1 12l14-5M1 15l14-4" /></Ico>,
  <Ico><path d="M3 1v14M13 1v14M1 6l14-5M1 10l14-5M1 14l14-5" /></Ico>,
  <Ico><path d="M1 2v13M15 2v13M1 12l14-7" /></Ico>,
  <Ico><path d="M2 2v13M6 2v13M10 2v13M14 2v13" /></Ico>,
  <Ico><path d="M3 2v13M7 2v13M11 2v13" /></Ico>,
  <Ico><path d="M1 2v13M15 2v13" /><MiniText x={5} y={9} stroke="none">G</MiniText></Ico>,
  <Ico><path d="M1 2v13M4 2v13M7 2v13M10 2v13M15 2v13" /></Ico>,
  <Ico sw={1.4}><path d="M2 2v13M5 2v13M6.500 2v13M9 2v13M11 2v13M14 2v13" /></Ico>,
  <Ico><path d="M1 2v13M6 2v13M8 2v13M10 2v13M15 2v13" /></Ico>,
  <Ico><path d="M1 15L15 2M1 15l14-9M1 15l14-4M1 15h14" /></Ico>,
  <Ico><path d="M1 1v14h14M1 15L15 4M1 15l14-7M1 15l14-3" /></Ico>,
  <Ico><path d="M8 1v14M2 9l6 6 6-6" /></Ico>,
  <Ico><path d="M1 4h14L7 15z" /><Dot x={14} y={4} /></Ico>,
  <Ico sw={1.2}><rect x="1.500" y="3.500" width="13" height="10" /></Ico>,
  <Ico><path d="M8 2l4.500 5H10v6H6V7H3.500z" fill="#e01818" stroke="none" /></Ico>,
  <Ico><path d="M8 14l4.500-5H10V3H6v6H3.500z" fill="#108020" stroke="none" /></Ico>,
  <Ico><path d="M1 14l11-11" /><path d="M11 7l4 4h-2.500v3h-3v-3H7z" fill="#e01818" stroke="none" /></Ico>,
  <Ico><path d="M3 14L8 2l5 12M5 10h6" stroke="#111" strokeWidth={2} /></Ico>,
  <Ico><path d="M5 14L9 3l4 11M6.500 10h5" stroke="#111" strokeWidth={1.8} /><path d="M1 3h4M3 1v4" stroke="#111" /></Ico>,
  <Ico><rect x="2" y="2" width="12" height="12" fill="#a0a0a0" stroke="#c8c8c8" strokeWidth={2} /></Ico>,
  <Ico><path d="M2 2l12 12M14 2L2 14" stroke="#e02020" strokeWidth={1.6} /></Ico>,
  <Ico><rect x="2" y="9" width="4" height="6" stroke="#999" /><path d="M2 13L13 3" stroke="#bbb" /><circle cx="12" cy="3.500" r="3" fill="#f0e820" stroke="#d8c000" /></Ico>,
  <Ico><rect x="2.500" y="1.500" width="11" height="13" /><path d="M5 4.500h6M5 7.500h6M5 10.500h6" /></Ico>,
  <Ico><rect x="1.500" y="5.500" width="13" height="6" /><path d="M4 5.500v2M7 5.500v2M10 5.500v2M13 5.500v2" /></Ico>,
  <Ico><rect x="2.500" y="3.500" width="11" height="9" stroke="#555" /><path d="M5 6h4M5 9h3" stroke="#108040" strokeWidth={1.6} /></Ico>,
]

const Toolbox = () => (
  <ToolWindow>
    <ToolTitle>画线工具</ToolTitle>
    <ToolClose>×</ToolClose>
    <ToolGrid>
      {TOOLS.map((tool, i) => (
        <ToolCell key={i}>{tool}</ToolCell>
      ))}
    </ToolGrid>
  </ToolWindow>
)

const BreadthBars = () => (
  <BreadthWrap>
    <svg width={98} height={18} viewBox="0 0 98 18">
      <rect x={20} y={3} width={2} height={5} fill="#c02020" />
      <rect x={70} y={3} width={2} height={5} fill="#c02020" />
      <rect x={73} y={3} width={2} height={5} fill="#209020" />
      {[10, 13].map((y) => (
        <React.Fragment key={y}>
          <line x1={0} x2={47} y1={y} y2={y} stroke="#20a030" strokeWidth={2} strokeDasharray="6 2" />
          <line x1={53} x2={98} y1={y} y2={y} stroke="#e02828" strokeWidth={2} strokeDasharray="6 2" />
        </React.Fragment>
      ))}
    </svg>
  </BreadthWrap>
)

const App = () => (
  <Shell>
    <Global />
    <TopBar>
      <svg width={16} height={18} viewBox="0 0 18 18">
        <circle cx="9" cy="9" r="8" fill="#c8282c" />
        <path d="M5 5c4-2 8 0 8 3s-4 5-7 3M9 3c-2 3-2 6 1 8" fill="none" stroke="#fff" strokeWidth={1.6} />
      </svg>
      <Menu>
        {['系统', '功能', '报价', '分析', '资讯', '工具', '帮助'].map((m) => (
          <span key={m}>{m}</span>
        ))}
      </Menu>
      <Title>
        <span>交易未登录</span>
        <span>大禹节水</span>
      </Title>
      <Pills>
        {[['行', '情'], ['资', '讯'], ['交', '易'], ['网', '站']].map(([a, b]) => (
          <Pill key={a}>
            <span>{a}</span>
            <span>{b}</span>
          </Pill>
        ))}
      </Pills>
      <Rounds>
        <Round>
          <svg width={11} height={11} viewBox="0 0 11 11"><path d="M1 7h9" stroke="#555" strokeWidth={2} /></svg>
        </Round>
        <Round>
          <svg width={12} height={12} viewBox="0 0 12 12" fill="none" stroke="#555" strokeWidth={1.4}><path d="M4 3V1h7v6H9" /><path d="M1 4h7v6H1z" /></svg>
        </Round>
        <Round>
          <svg width={12} height={12} viewBox="0 0 12 12"><path d="M2 2l8 8M10 2l-8 8" stroke="#444" strokeWidth={2.4} /></svg>
        </Round>
      </Rounds>
    </TopBar>
    <Body>
      <ChartColumn>
        <MainPane />
        <VolumePane />
        <KdjPane />
        <WeekPane />
        <DateAxis />
        <TabRow $h={18}>
          <IndexTab $w={30} $on $cjk>指标</IndexTab>
          <IndexTab $w={30} $cjk>模板</IndexTab>
          {INDEX_TABS.map(([t, w]) => (
            <IndexTab key={t} $w={w}>{t}</IndexTab>
          ))}
          <ScaleButtons>
            <ScaleButton>+</ScaleButton>
            <ScaleButton>-</ScaleButton>
            <ScaleButton>0</ScaleButton>
          </ScaleButtons>
        </TabRow>
        <TabRow $h={17}>
          <IndexTab $w={47} $cjk>扩展∧</IndexTab>
        </TabRow>
      </ChartColumn>
      <Panel />
      <RightRail />
    </Body>
    <StatusBar>
      <Stat $w={24}>上证</Stat>
      <Stat $w={57} $b $c="#108020">4393.83</Stat>
      <Stat $w={47} $b $c="#108020">20.02</Stat>
      <Stat $w={40} $b $c="#108020">0.47%</Stat>
      <Stat $w={45}>9169亿</Stat>
      <Stat $w={24}>深证</Stat>
      <Stat $w={50} $b $c="#108020">14598.7</Stat>
      <Stat $w={49} $b $c="#108020">-144.52</Stat>
      <Stat $w={46} $b $c="#108020">-0.98%</Stat>
      <Stat $w={47}>6697亿</Stat>
      <Stat $w={23}>中小</Stat>
      <Stat $w={62} $b $c="#c81818">8889.79</Stat>
      <Stat $w={36} $b $c="#c81818">3.71</Stat>
      <Stat $w={47} $b $c="#c81818">0.04%</Stat>
      <Stat $w={47}>2391亿</Stat>
      <StatusRule />
      <BreadthBars />
      <StatusRule />
      <ServerName $w={120}>浙商证券行情主站四</ServerName>
      <Tray>
        <svg width={14} height={11} viewBox="0 0 14 11" fill="none" stroke="#777"><path d="M.5.500h13v10H.5zM2 3.500h10M2 6h10M2 8.500h10" /></svg>
        <svg width={12} height={12} viewBox="0 0 12 12"><circle cx="6" cy="6" r="5.500" fill="#e8d820" stroke="#a89c10" /><path d="M6 2.500L9 6H7v3H5V6H3z" fill="#6a6010" /></svg>
        <svg width={11} height={14} viewBox="0 0 11 14" fill="none" stroke="#666"><circle cx="5.500" cy="3" r="1.500" /><path d="M5.500 5L2 13h7zM1 1a6 6 0 000 5M10 1a6 6 0 010 5" /></svg>
        <svg width={9} height={12} viewBox="0 0 9 12" fill="none" stroke="#555"><path d="M4.500 0L0 5h9zM4.500 5L0 11h9z" /></svg>
        <svg width={3} height={10} viewBox="0 0 3 10"><path d="M1 0h1.500v6H1zM1 8h1.500v2H1z" fill="#555" /></svg>
      </Tray>
    </StatusBar>
    <Toolbox />
    <Watermark>178448.COM</Watermark>
  </Shell>
)

export default App
